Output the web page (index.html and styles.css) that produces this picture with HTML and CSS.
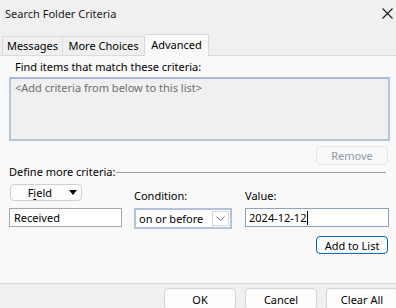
FILE: index.html
```html
<!DOCTYPE html>
<html lang="en">
<head>
    <meta charset="UTF-8">
    <title>Search Folder Criteria</title>
    <link rel="stylesheet" href="styles.css">
</head>
<body>
    <div class="dialog">
        <div class="titlebar">
            <span class="title">Search Folder Criteria</span>
            <svg class="close" width="11" height="11" viewBox="0 0 11 11"><path d="M0.5 0.5 L10.5 10.5 M10.5 0.5 L0.5 10.5" stroke="#1a1a1a" stroke-width="1.1"/></svg>
        </div>

        <div class="tabs">
            <div class="tab tab-messages">Messages</div>
            <div class="tab tab-more">More Choices</div>
            <div class="tab tab-advanced active">Advanced</div>
        </div>

        <div class="panel">
            <div class="find-label">Find items that match these criteria:</div>
            <div class="criteria-list">&lt;Add criteria from below to this list&gt;</div>
            <div class="remove-row">
                <button class="btn btn-disabled">Remove</button>
            </div>

            <div class="define-row">
                <span>Define more criteria:</span>
                <span class="define-line"></span>
            </div>

            <div class="criteria-grid">
                <button class="field-btn"><span>F<u>i</u>eld</span><span class="tri"></span></button>
                <label class="grid-label">Condition:</label>
                <label class="grid-label">Value:</label>

                <div class="textbox">Received</div>
                <div class="combo">
                    <span>on or before</span>
                    <span class="combo-arrow">
                        <svg width="9" height="5" viewBox="0 0 9 5"><path d="M0.5 0.5 L4.5 4.5 L8.5 0.5" fill="none" stroke="#707070" stroke-width="1"/></svg>
                    </span>
                </div>
                <div class="textbox focused">2024-12-12<span class="caret"></span></div>
            </div>

            <div class="add-row">
                <button class="btn btn-default">Add to List</button>
            </div>
        </div>

        <div class="footer">
            <button class="btn footer-btn">OK</button>
            <button class="btn footer-btn">Cancel</button>
            <button class="btn footer-btn">Clear All</button>
        </div>
    </div>
</body>
</html>
```

FILE: styles.css
```css
* {
    margin: 0;
    padding: 0;
    box-sizing: border-box;
}

body {
    font-family: "Noto Sans", "Open Sans", sans-serif;
    font-size: 11px;
    color: #000;
    background-color: #f0f0f0;
    width: 396px;
    height: 308px;
    overflow: hidden;
}

.dialog {
    display: flex;
    flex-direction: column;
    height: 308px;
}

/* barra de titulo */
.titlebar {
    height: 27px;
    display: flex;
    align-items: center;
    justify-content: space-between;
    padding: 0 3px 0 5px;
    background-color: #f0f0f0;
}

.title {
    font-size: 11px;
    color: #1a1a1a;
}

/* pestañas */
.tabs {
    height: 28px;
    display: flex;
    align-items: flex-end;
    padding-left: 2px;
    background-color: #f0f0f0;
}

.tab {
    height: 19px;
    line-height: 18px;
    text-align: center;
    border: 1px solid #dadada;
    border-bottom: none;
    background-color: #f0f0f0;
    color: #000;
}

.tab-messages {
    width: 61px;
}

.tab-more {
    width: 82px;
    border-left: none;
}

.tab-advanced {
    width: 64px;
    border-left: none;
}

.tab.active {
    height: 22px;
    line-height: 19px;
    background-color: #f9f9f9;
    position: relative;
    z-index: 1;
    margin-bottom: -1px;
}

/* panel */
.panel {
    height: 228px;
    background-color: #f9f9f9;
    border-top: 1px solid #dadada;
    padding: 4px 6px 0 9px;
}

.find-label {
    height: 14px;
    line-height: 14px;
    margin-left: 6px;
}

.criteria-list {
    margin-top: 3px;
    height: 64px;
    background-color: #f0f0f0;
    border: 2px solid #b4c5da;
    border-top-color: #a9bcd4;
    padding: 0 4px;
    color: #6e6e6e;
    line-height: 17px;
}

.remove-row,
.add-row {
    display: flex;
    justify-content: flex-end;
    padding-right: 2px;
}

.remove-row {
    margin-top: 5px;
}

.btn {
    font-family: "Noto Sans", "Open Sans", sans-serif;
    font-size: 11px;
    width: 72px;
    height: 19px;
    background-color: #fdfdfd;
    border: 1px solid #d0d0d0;
    border-radius: 4px;
    color: #000;
}

.btn-disabled {
    border-color: #e6e6e6;
    color: #8c9bab;
    background-color: #f9f9f9;
}

.btn-default {
    height: 18px;
    border-color: #0067c0;
    line-height: 15px;
}

.define-row {
    display: flex;
    align-items: center;
    height: 14px;
    line-height: 14px;
}

.define-line {
    flex: 1;
    height: 1px;
    background-color: #a0a0a0;
    margin: 1px 4px 0 1px;
}

/* criterios */
.criteria-grid {
    margin-top: 5px;
    display: grid;
    grid-template-columns: 113px 98px 145px;
    column-gap: 12px;
    grid-template-rows: 19px 21px;
    row-gap: 5px;
    align-items: start;
}

.criteria-grid > :nth-child(3),
.criteria-grid > :nth-child(6) {
    margin-left: 1px;
}

.field-btn {
    font-family: "Noto Sans", "Open Sans", sans-serif;
    font-size: 11px;
    width: 72px;
    height: 17px;
    margin-left: 1px;
    background-color: #fdfdfd;
    border: 1px solid #cfcfcf;
    border-radius: 4px;
    display: flex;
    align-items: center;
    justify-content: flex-end;
    gap: 17px;
    padding-right: 4px;
    line-height: 15px;
}

.field-btn u {
    text-underline-offset: 2px;
}

.tri {
    width: 0;
    height: 0;
    border-left: 4.5px solid transparent;
    border-right: 4.5px solid transparent;
    border-top: 5px solid #000;
}

.grid-label {
    align-self: end;
    line-height: 14px;
}

.textbox {
    height: 19px;
    border: 1px solid #a8a8a8;
    background-color: #fff;
    padding-left: 4px;
    line-height: 17px;
    display: flex;
    align-items: center;
}

.textbox.focused {
    border: 1px solid #8aa3c4;
    padding-left: 3px;
}

.caret {
    display: inline-block;
    width: 1px;
    height: 14px;
    background-color: #000;
    margin-left: 1px;
}

.combo {
    height: 21px;
    border: 2px solid #b2c4da;
    background-color: #fff;
    display: flex;
    align-items: center;
    justify-content: space-between;
    padding: 0 1px 0 3px;
}

.combo-arrow {
    width: 17px;
    height: 15px;
    border: 1px solid #d9d9d9;
    display: flex;
    align-items: center;
    justify-content: center;
}

.add-row {
    margin-top: 7px;
}

/* pie */
.footer {
    flex: 1;
    border-top: 1px solid #dcdcdc;
    background-color: #f0f0f0;
    display: flex;
    gap: 9px;
    padding: 4px 0 0 164px;
    overflow: hidden;
}

.footer-btn {
    flex: none;
    height: 22px;
    border-color: #d3d3d3;
}
```
